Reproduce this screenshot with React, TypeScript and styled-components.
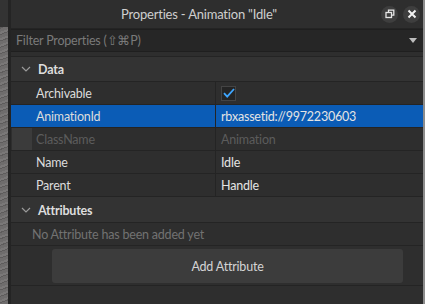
import styled, { createGlobalStyle } from 'styled-components';

const GlobalStyle = createGlobalStyle`
  html, body {
    margin: 0;
    padding: 0;
    background: #2b2b2b;
    overflow: hidden;
  }
  * {
    box-sizing: border-box;
  }
`;

const properties = [
  { name: 'Archivable', kind: 'check' },
  { name: 'AnimationId', value: 'rbxassetid://9972230603', selected: true },
  { name: 'ClassName', value: 'Animation', readOnly: true },
  { name: 'Name', value: 'Idle' },
  { name: 'Parent', value: 'Handle' },
];

function App() {
  return (
    <>
      <GlobalStyle />
      <Screen>
        <Backdrop />
        <Gutter />
        <Panel>
          <TitleBar>
            <Title>Properties - Animation "Idle"</Title>
            <WindowButtons>
              <RoundButton>
                <svg width="10" height="10" viewBox="0 0 10 10" fill="none" stroke="#e6e6e6" strokeWidth="1.3">
                  <rect x="1" y="3.5" width="5.5" height="5" />
                  <path d="M3.5 3.5V1.2h5.3v5H6.5" />
                </svg>
              </RoundButton>
              <RoundButton>
                <svg width="10" height="10" viewBox="0 0 10 10" stroke="#f2f2f2" strokeWidth="2">
                  <path d="M1.5 1.5l7 7M8.5 1.5l-7 7" />
                </svg>
              </RoundButton>
            </WindowButtons>
          </TitleBar>

          <FilterBox>
            <FilterText>Filter Properties (⇧⌘P)</FilterText>
            <svg width="8" height="5" viewBox="0 0 8 5">
              <path d="M0 0h8L4 5z" fill="#bdbdbd" />
            </svg>
          </FilterBox>

          <SectionHeader $first>
            <Chevron />
            <SectionTitle>Data</SectionTitle>
          </SectionHeader>

          {properties.map((p) => (
            <Row key={p.name} $selected={p.selected}>
              <NameCell>
                {p.readOnly && <LockMark />}
                <NameText $dim={p.readOnly}>{p.name}</NameText>
              </NameCell>
              <ValueCell>
                {p.kind === 'check' ? (
                  <CheckBox>
                    <svg width="12" height="10" viewBox="0 0 12 10" fill="none" stroke="#3ea6ff" strokeWidth="1.8">
                      <path d="M1 5.2l3.2 3.4L11 1" />
                    </svg>
                  </CheckBox>
                ) : (
                  <ValueText $dim={p.readOnly}>{p.value}</ValueText>
                )}
              </ValueCell>
            </Row>
          ))}

          <SectionHeader>
            <Chevron />
            <SectionTitle>Attributes</SectionTitle>
          </SectionHeader>
          <EmptyNote>No Attribute has been added yet</EmptyNote>
          <ButtonRow>
            <AddButton>Add Attribute</AddButton>
          </ButtonRow>
        </Panel>
      </Screen>
    </>
  );
}

function Chevron() {
  return (
    <ChevronWrap>
      <svg width="10" height="6" viewBox="0 0 10 6" fill="none" stroke="#9a9a9a" strokeWidth="1.2">
        <path d="M1 1l4 4 4-4" />
      </svg>
    </ChevronWrap>
  );
}

export default App;

const Screen = styled.div`
  display: flex;
  width: 425px;
  height: 304px;
  font-family: Lato, 'Open Sans', sans-serif;
  font-size: 12.5px;
  letter-spacing: -0.2px;
`;

const Backdrop = styled.div`
  width: 8px;
  background:
    linear-gradient(#333 0 27px, transparent 27px),
    repeating-linear-gradient(160deg, #7a7878 0 2px, #5e5c5c 2px 3px, #6f6d6d 3px 6px);
`;

const Gutter = styled.div`
  width: 3px;
  background: #242424;
`;

const Panel = styled.div`
  flex: 1;
  display: flex;
  flex-direction: column;
  background: #2e2e2e;
  border-right: 2px solid #8c8c8c;
`;

const TitleBar = styled.div`
  height: 29px;
  display: flex;
  align-items: center;
  background: #2e2e2e;
  border-bottom: 1px solid #242424;
`;

const Title = styled.div`
  flex: 1;
  text-align: center;
  color: #cfcfcf;
  font-size: 13px;
  padding-left: 6px;
`;

const WindowButtons = styled.div`
  display: flex;
  gap: 5px;
  padding-right: 3px;
`;

const RoundButton = styled.div`
  width: 17px;
  height: 17px;
  border-radius: 50%;
  background: #3e3e3e;
  display: flex;
  align-items: center;
  justify-content: center;
`;

const FilterBox = styled.div`
  height: 23px;
  display: flex;
  align-items: center;
  justify-content: space-between;
  padding: 0 6px 0 5px;
  background: #262626;
  border-top: 1px solid #1f1f1f;
  border-bottom: 1px solid #1f1f1f;
  margin-bottom: 4px;
`;

const FilterText = styled.span`
  color: #7a7a7a;
`;

const SectionHeader = styled.div<{ $first?: boolean }>`
  height: 26px;
  display: flex;
  align-items: center;
  background: #333333;
  border-top: 1px solid ${({ $first }) => ($first ? '#242424' : 'transparent')};
  border-bottom: 1px solid #242424;
`;

const ChevronWrap = styled.div`
  width: 27px;
  display: flex;
  justify-content: center;
  padding-left: 2px;
`;

const SectionTitle = styled.span`
  color: #dedede;
  font-weight: 700;
`;

const Row = styled.div<{ $selected?: boolean }>`
  height: 23px;
  display: flex;
  background: ${({ $selected }) => ($selected ? '#0b5cb6' : '#2e2e2e')};
  border-bottom: 1px solid #242424;
`;

const NameCell = styled.div`
  width: 205px;
  display: flex;
  align-items: center;
  padding-left: 25px;
  position: relative;
  border-right: 1px solid #242424;
`;

const LockMark = styled.div`
  position: absolute;
  left: 1px;
  top: 0;
  bottom: 0;
  width: 20px;
  background: #3b3b3b;
`;

const NameText = styled.span<{ $dim?: boolean }>`
  color: ${({ $dim }) => ($dim ? '#5c5c5c' : '#dcdcdc')};
`;

const ValueCell = styled.div`
  flex: 1;
  display: flex;
  align-items: center;
  padding-left: 5px;
`;

const ValueText = styled.span<{ $dim?: boolean }>`
  color: ${({ $dim }) => ($dim ? '#5c5c5c' : '#e4e4e4')};
`;

const CheckBox = styled.div`
  width: 15px;
  height: 15px;
  border: 1px solid #444;
  background: #242424;
  display: flex;
  align-items: center;
  justify-content: center;
`;

const EmptyNote = styled.div`
  height: 23px;
  display: flex;
  align-items: center;
  padding-left: 21px;
  color: #727272;
  border-bottom: 1px solid #242424;
`;

const ButtonRow = styled.div`
  padding: 3px 20px 2px 41px;
  border-bottom: 1px solid #242424;
`;

const AddButton = styled.div`
  height: 34px;
  border-radius: 3px;
  background: #3c3c3c;
  color: #d4d4d4;
  display: flex;
  align-items: center;
  justify-content: center;
`;
